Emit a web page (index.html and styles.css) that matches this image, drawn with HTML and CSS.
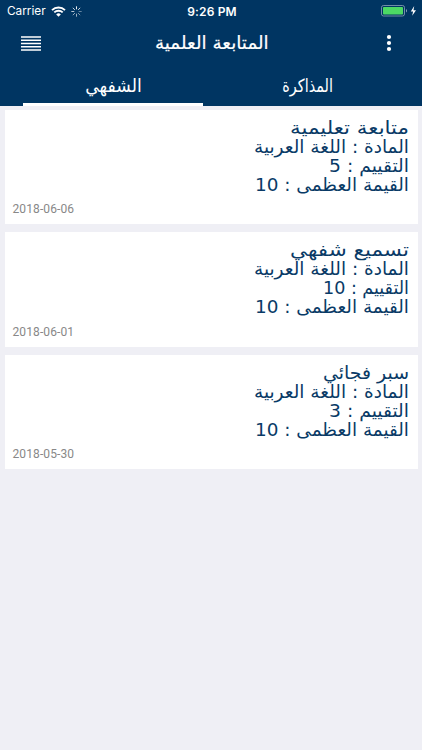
FILE: index.html
```html
<!DOCTYPE html>
<html lang="ar">
<head>
    <meta charset="UTF-8">
    <meta name="viewport" content="width=device-width, initial-scale=1.0">
    <title>المتابعة العلمية</title>
    <link rel="stylesheet" href="styles.css">
</head>
<body>
    <div class="header">
        <div class="status-bar">
            <div class="status-left">
                <span class="carrier">Carrier</span>
                <svg class="wifi" width="15" height="11" viewBox="0 0 15 11">
                    <path d="M1 4.1a9.3 9.3 0 0 1 13 0M3.3 6.4a6 6 0 0 1 8.4 0" fill="none" stroke="#fff" stroke-width="1.9"/>
                    <path d="M7.5 10.8L5.2 8.4a3.3 3.3 0 0 1 4.6 0z" fill="#fff"/>
                </svg>
                <svg class="spinner" width="11" height="11" viewBox="0 0 11 11" fill="none" stroke="#fff" stroke-width="1" stroke-linecap="round">
                    <path d="M5.5 .7v2.2" opacity=".9"/>
                    <path d="M8.9 2.1L7.4 3.6" opacity=".8"/>
                    <path d="M10.3 5.5H8.1" opacity=".4"/>
                    <path d="M8.9 8.9L7.4 7.4" opacity=".5"/>
                    <path d="M5.5 10.3V8.1" opacity=".6"/>
                    <path d="M2.1 8.9l1.5-1.5" opacity=".6"/>
                    <path d="M.7 5.5h2.2" opacity=".7"/>
                    <path d="M2.1 2.1l1.5 1.5" opacity=".8"/>
                </svg>
            </div>
            <div class="clock">9:26 PM</div>
            <div class="status-right">
                <svg width="36" height="12" viewBox="0 0 36 12">
                    <rect x=".5" y=".5" width="23" height="10.5" rx="2" fill="none" stroke="#8ea5b9" stroke-width=".8"/>
                    <rect x="2" y="2" width="20" height="7.5" rx=".8" fill="#4cd964"/>
                    <path d="M25 4v3.6q1-.5 1-1.8t-1-1.8z" fill="#8ea5b9"/>
                    <path d="M33.2 1L29.8 6.4h2.3L31.2 10.8 35 5.2h-2.5z" fill="#fff"/>
                </svg>
            </div>
        </div>
        <div class="nav-bar">
            <svg class="menu-icon" width="20" height="15" viewBox="0 0 20 15" stroke="#fff" stroke-width="1.3">
                <path d="M0 1h20M0 4.25h20M0 7.5h20M0 10.75h20M0 14h20"/>
            </svg>
            <h1>المتابعة العلمية</h1>
            <svg class="more-icon" width="6" height="18" viewBox="0 0 6 18" fill="#fff">
                <circle cx="3" cy="3" r="2.1"/>
                <circle cx="3" cy="9" r="2.1"/>
                <circle cx="3" cy="15" r="2.1"/>
            </svg>
        </div>
        <div class="tabs">
            <div class="tab active"><span class="tab-oral">الشفهي</span></div>
            <div class="tab"><span class="tab-exam">المذاكرة</span></div>
        </div>
    </div>

    <div class="list">
        <div class="card">
            <svg class="details" width="180" height="80" fill="#093a66">
                <text x="179" y="17" textLength="119" lengthAdjust="spacingAndGlyphs">متابعة تعليمية</text>
                <text x="179" y="36" textLength="155" lengthAdjust="spacingAndGlyphs">المادة : اللغة العربية</text>
                <text x="179" y="55" textLength="80" lengthAdjust="spacingAndGlyphs">التقييم : 5</text>
                <text x="179" y="74" textLength="154" lengthAdjust="spacingAndGlyphs">القيمة العظمى : 10</text>
            </svg>
            <div class="date">2018-06-06</div>
        </div>
        <div class="card">
            <svg class="details" width="180" height="80" fill="#093a66">
                <text x="179" y="17" textLength="119" lengthAdjust="spacingAndGlyphs">تسميع شفهي</text>
                <text x="179" y="36" textLength="155" lengthAdjust="spacingAndGlyphs">المادة : اللغة العربية</text>
                <text x="179" y="55" textLength="86" lengthAdjust="spacingAndGlyphs">التقييم : 10</text>
                <text x="179" y="74" textLength="154" lengthAdjust="spacingAndGlyphs">القيمة العظمى : 10</text>
            </svg>
            <div class="date">2018-06-01</div>
        </div>
        <div class="card">
            <svg class="details" width="180" height="80" fill="#093a66">
                <text x="179" y="17" textLength="86" lengthAdjust="spacingAndGlyphs">سبر فجائي</text>
                <text x="179" y="36" textLength="155" lengthAdjust="spacingAndGlyphs">المادة : اللغة العربية</text>
                <text x="179" y="55" textLength="80" lengthAdjust="spacingAndGlyphs">التقييم : 3</text>
                <text x="179" y="74" textLength="154" lengthAdjust="spacingAndGlyphs">القيمة العظمى : 10</text>
            </svg>
            <div class="date">2018-05-30</div>
        </div>
    </div>
</body>
</html>
```
FILE: styles.css
```css
body {
    margin: 0;
    min-height: 750px;
    background-color: #efeff5;
    font-family: "DejaVu Sans", sans-serif;
}

svg {
    display: block;
}

/* Encabezado */
.header {
    height: 106px;
    background-color: #003562;
    color: white;
}

.status-bar {
    display: grid;
    grid-template-columns: 1fr auto 1fr;
    align-items: center;
    height: 22px;
    padding: 0 5px 0 7px;
    font-family: Inter, sans-serif;
    font-size: 12px;
}

.status-left {
    display: flex;
    align-items: center;
}

.carrier {
    font-size: 11.8px;
}

.wifi {
    margin-left: 5px;
}

.spinner {
    margin-left: 5px;
}

.clock {
    font-weight: 600;
    letter-spacing: 0.15px;
}

.status-right {
    display: flex;
    justify-content: flex-end;
}

.nav-bar {
    display: grid;
    grid-template-columns: 1fr auto 1fr;
    align-items: center;
    height: 42px;
    padding: 0 30px 0 21px;
}

.more-icon {
    justify-self: end;
}

h1 {
    margin: 0 0 2px;
    padding-left: 10px;
    font-size: 18px;
    font-weight: normal;
    white-space: nowrap;
    transform: scaleX(1.02);
    -webkit-text-stroke: 0.2px white;
}

/* Pestañas */
.tabs {
    display: flex;
    gap: 15px;
    height: 42px;
    padding: 0 24px 0 23px;
}

.tab {
    box-sizing: border-box;
    width: 180px;
    border-bottom: 3px solid transparent;
    text-align: center;
    font-size: 18px;
    line-height: 43px;
}

.tab.active {
    border-bottom-color: white;
}

.tab-oral, .tab-exam {
    display: inline-block;
}

.tab-oral {
    transform: scaleX(0.96);
}

.tab-exam {
    transform: scaleX(0.8);
}

/* Lista de tarjetas */
.list {
    display: flex;
    flex-direction: column;
    gap: 8px;
    padding: 4px 4.5px;
}

.card {
    box-sizing: border-box;
    display: flex;
    flex-direction: column;
    justify-content: space-between;
    height: 114.3px;
    padding: 7px 8px;
    background-color: white;
}

.details {
    align-self: flex-end;
    direction: rtl;
    font-family: "DejaVu Sans", sans-serif;
    font-size: 18px;
}

.date {
    color: #888;
    font-family: Roboto, sans-serif;
    font-size: 12px;
    line-height: 16px;
    letter-spacing: 0.1px;
}
```
